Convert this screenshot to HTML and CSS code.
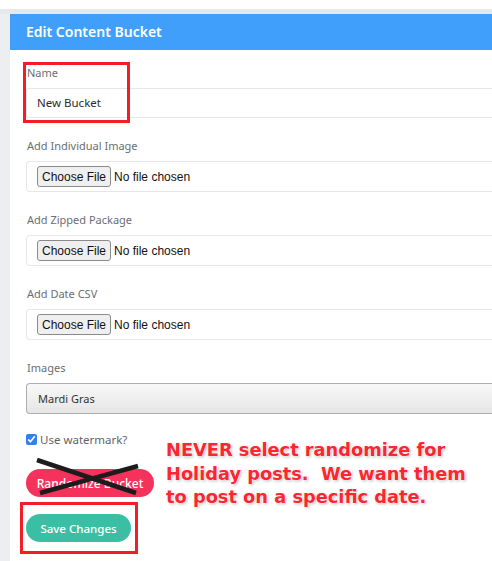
FILE: index.html
```html
<!DOCTYPE html>
<html>
<head>
<meta charset="utf-8">
<link rel="stylesheet" href="styles.css">
</head>
<body>
<div class="page">
  <div class="shell">
    <div class="card">
      <div class="card-header">Edit Content Bucket</div>
      <div class="card-body">
        <div class="group">
          <label class="label">Name</label>
          <div class="text-input">New Bucket</div>
        </div>
        <div class="group">
          <label class="label">Add Individual Image</label>
          <div class="file-box"><input type="file" class="file"></div>
        </div>
        <div class="group">
          <label class="label">Add Zipped Package</label>
          <div class="file-box"><input type="file" class="file"></div>
        </div>
        <div class="group">
          <label class="label">Add Date CSV</label>
          <div class="file-box"><input type="file" class="file"></div>
        </div>
        <div class="group">
          <label class="label">Images</label>
          <div class="select">Mardi Gras</div>
        </div>
        <label class="check"><input type="checkbox" checked class="checkbox"> Use watermark?</label>
        <div class="buttons">
          <button class="btn btn-pink">Randomize Bucket</button>
          <button class="btn btn-teal">Save Changes</button>
        </div>
      </div>
    </div>
  </div>
  <div class="redbox redbox-name"></div>
  <div class="redbox redbox-save"></div>
  <svg class="cross" width="110" height="40" viewBox="0 0 110 40">
    <line x1="4" y1="3" x2="103" y2="36" stroke="#1c1c1c" stroke-width="4.5"/>
    <line x1="7" y1="36" x2="105" y2="9" stroke="#1c1c1c" stroke-width="4.5"/>
  </svg>
  <div class="note">NEVER select randomize for<br>Holiday posts.&nbsp; We want them<br>to post on a specific date.</div>
</div>
</body>
</html>
```
FILE: styles.css
```css
html, body {
  margin: 0;
  padding: 0;
  overflow: hidden;
  background: #ffffff;
}
body {
  font-family: "Noto Sans", "Open Sans", sans-serif;
  width: 492px;
  height: 561px;
}
.page {
  position: relative;
  height: 561px;
  padding-top: 9px;
  box-sizing: border-box;
}
.shell {
  background: #eceef2;
  border-top: 5px solid #e6e8ec;
  padding-left: 10px;
  height: 552px;
  box-sizing: border-box;
  overflow: hidden;
}
.card {
  background: #ffffff;
  width: 482px;
  height: 100%;
}
.card-header {
  background: #3f9ffb;
  color: #ffffff;
  height: 36px;
  line-height: 36px;
  padding-left: 16px;
  font-size: 14px;
  font-weight: 600;
}
.card-body {
  padding: 15px 0 0 16px;
}
.group {
  margin-bottom: 20px;
}
.label {
  display: block;
  font-size: 11px;
  line-height: 16px;
  color: #6b6e73;
  margin-bottom: 7px;
  padding-left: 1px;
}
.text-input {
  height: 30px;
  box-sizing: border-box;
  border: 1px solid #e6e7ea;
  border-right: none;
  border-radius: 3px 0 0 3px;
  padding-left: 10px;
  font-size: 11.5px;
  line-height: 28px;
  color: #2b2b2b;
}
.file-box {
  height: 31px;
  box-sizing: border-box;
  border: 1px solid #e6e7ea;
  border-right: none;
  border-radius: 4px 0 0 4px;
  padding-left: 10px;
  display: flex;
  align-items: center;
}
.file {
  font-family: "Liberation Sans", Arial, sans-serif;
  font-size: 12px;
  color: #111;
}
.file::file-selector-button {
  font-family: "Liberation Sans", Arial, sans-serif;
  font-size: 12px;
  height: 21px;
  padding: 0 4px;
  margin-right: 3px;
  border: 1px solid #8a8a8a;
  border-radius: 3px;
  background: #efefef;
  color: #111;
}
.select {
  height: 31px;
  box-sizing: border-box;
  border: 1px solid #aeaeae;
  border-right: none;
  border-radius: 4px 0 0 4px;
  background: linear-gradient(#f8f8f8, #e6e6e6);
  padding-left: 11px;
  font-size: 11px;
  line-height: 29px;
  color: #333333;
}
.check {
  display: flex;
  align-items: center;
  margin-top: -4px;
  font-size: 11.5px;
  color: #5f6368;
  height: 18px;
}
.checkbox {
  width: 11px;
  height: 11px;
  margin: 0 3px 0 0;
  accent-color: #2f7ff5;
}
.buttons {
  display: flex;
  flex-direction: column;
  align-items: flex-start;
  gap: 17px;
  margin-top: 21px;
}
.btn {
  border: none;
  border-radius: 14px;
  height: 28px;
  color: #ffffff;
  font-family: "Noto Sans", sans-serif;
  font-size: 11.5px;
  font-weight: 500;
  padding: 0;
}
.btn-pink {
  background: #f5325c;
  width: 128px;
  font-size: 12px;
}
.btn-teal {
  background: #3bbfa4;
  width: 105px;
}
.redbox {
  position: absolute;
  border: 3px solid #f41d25;
  box-sizing: border-box;
}
.redbox-name {
  left: 23px;
  top: 62px;
  width: 107px;
  height: 61px;
}
.redbox-save {
  left: 20px;
  top: 502px;
  width: 118px;
  height: 52px;
}
.cross {
  position: absolute;
  left: 33px;
  top: 457px;
}
.note {
  position: absolute;
  left: 166px;
  top: 438px;
  font-family: "DejaVu Sans", "Liberation Sans", sans-serif;
  font-weight: 700;
  font-size: 17.8px;
  line-height: 23.5px;
  color: #fb2630;
  text-shadow: 0 0 2px #ffffff, 0 0 2px #ffffff, 1px 1px 3px rgba(0,0,0,0.35);
  white-space: nowrap;
}
```
